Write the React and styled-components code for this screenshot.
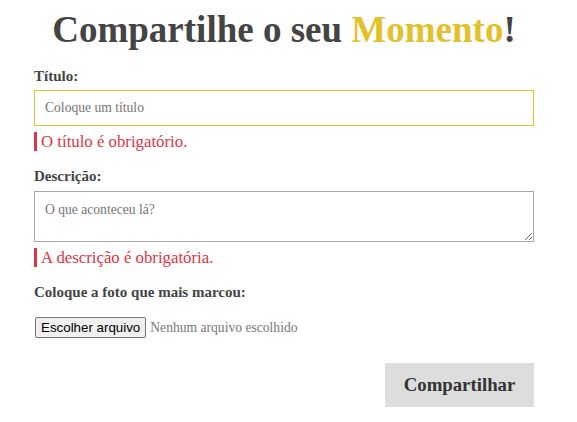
import styled, { createGlobalStyle } from 'styled-components';

const GlobalStyle = createGlobalStyle`
  body {
    margin: 0;
    background: #fff;
    font-family: "Liberation Serif", "Times New Roman", serif;
    color: #444;
  }
`;

const Page = styled.div`
  width: 500px;
  margin-left: 34px;
  padding-top: 8px;
`;

const Title = styled.h1`
  margin: 0 0 15px;
  font-size: 37px;
  line-height: 44px;
  font-weight: bold;
  text-align: center;
  color: #444;

  span {
    color: #e1c12c;
  }
`;

const Form = styled.form`
  display: flex;
  flex-direction: column;
`;

const Field = styled.div`
  display: flex;
  flex-direction: column;
  margin-bottom: 16px;
`;

const Label = styled.label`
  font-size: 15px;
  line-height: 18px;
  font-weight: bold;
  color: #444;
  margin-bottom: ${(p) => (p.$gap ? p.$gap : 5)}px;
`;

const TextInput = styled.input`
  box-sizing: border-box;
  width: 100%;
  height: 36px;
  padding: 0 10px;
  border: 1px solid ${(p) => (p.$active ? '#e1c12c' : '#a9a9a9')};
  outline: none;
  font-family: inherit;
  font-size: 13.6px;
  color: #444;

  &::placeholder {
    color: #757575;
  }
`;

const TextArea = styled.textarea`
  box-sizing: border-box;
  width: 100%;
  height: 51px;
  padding: 10px;
  border: 1px solid #a9a9a9;
  outline: none;
  font-family: inherit;
  font-size: 13.6px;
  line-height: 16px;
  color: #444;
  display: block;

  &::placeholder {
    color: #757575;
  }
`;

const ErrorMsg = styled.p`
  margin: 6px 0 0;
  padding-left: 4px;
  border-left: 3px solid #dc3545;
  font-size: 16.8px;
  line-height: 19px;
  color: #dc3545;
`;

const FileRow = styled.div`
  display: flex;
  align-items: center;
  gap: 4px;
  margin-top: 11px;
  margin-left: 1px;
`;

const FileButton = styled.span`
  box-sizing: border-box;
  height: 21px;
  padding: 0 5px;
  border: 1px solid #767676;
  border-radius: 2px;
  background: #efefef;
  font-family: "Liberation Sans", Arial, sans-serif;
  font-size: 13.33px;
  line-height: 19px;
  color: #000;
`;

const FileName = styled.span`
  font-size: 13.6px;
  color: #777;
`;

const Actions = styled.div`
  display: flex;
  justify-content: flex-end;
  margin-top: 9px;
`;

const Submit = styled.button`
  width: 149px;
  height: 44px;
  border: none;
  background: #ddd;
  font-family: inherit;
  font-size: 18.8px;
  font-weight: bold;
  color: #333;
  cursor: pointer;
`;

export default function App() {
  return (
    <>
      <GlobalStyle />
      <Page>
        <Title>
          Compartilhe o seu <span>Momento</span>!
        </Title>
        <Form onSubmit={(e) => e.preventDefault()}>
          <Field>
            <Label htmlFor="titulo">Título:</Label>
            <TextInput id="titulo" $active autoFocus placeholder="Coloque um título" />
            <ErrorMsg>O título é obrigatório.</ErrorMsg>
          </Field>
          <Field>
            <Label htmlFor="descricao" $gap={6}>Descrição:</Label>
            <TextArea id="descricao" placeholder="O que aconteceu lá?" />
            <ErrorMsg>A descrição é obrigatória.</ErrorMsg>
          </Field>
          <Field>
            <Label>Coloque a foto que mais marcou:</Label>
            <FileRow>
              <FileButton>Escolher arquivo</FileButton>
              <FileName>Nenhum arquivo escolhido</FileName>
            </FileRow>
          </Field>
          <Actions>
            <Submit type="submit">Compartilhar</Submit>
          </Actions>
        </Form>
      </Page>
    </>
  );
}
